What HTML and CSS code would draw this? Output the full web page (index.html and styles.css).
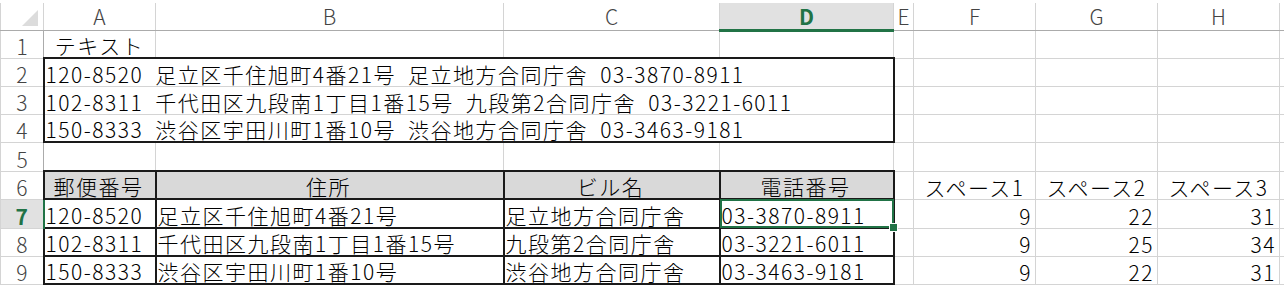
FILE: index.html
```html
<!DOCTYPE html>
<html lang="ja">
<head>
  <meta charset="UTF-8">
  <title>Sheet1</title>
  <link rel="stylesheet" href="styles.css">
</head>
<body>
  <table class="sheet">
    <colgroup>
      <col class="w-rh"><col class="w-a"><col class="w-b"><col class="w-c"><col class="w-d">
      <col class="w-e"><col class="w-f"><col class="w-g"><col class="w-h"><col class="w-i">
    </colgroup>
    <tr class="head">
      <th class="corner"><span class="tri"></span></th>
      <th>A</th><th>B</th><th>C</th><th class="cur-col">D</th><th>E</th><th>F</th><th>G</th><th>H</th><th></th>
    </tr>
    <tr class="h28">
      <th class="rn">1</th>
      <td class="center">テキスト</td><td></td><td></td><td></td><td></td><td></td><td></td><td></td><td></td>
    </tr>
    <tr class="h28">
      <th class="rn">2</th>
      <td colspan="4" class="box box-top">120-8520 足立区千住旭町4番21号 足立地方合同庁舎 03-3870-8911</td>
      <td></td><td></td><td></td><td></td><td></td>
    </tr>
    <tr class="h28">
      <th class="rn">3</th>
      <td colspan="4" class="box">102-8311 千代田区九段南1丁目1番15号 九段第2合同庁舎 03-3221-6011</td>
      <td></td><td></td><td></td><td></td><td></td>
    </tr>
    <tr class="h28">
      <th class="rn">4</th>
      <td colspan="4" class="box box-bot">150-8333 渋谷区宇田川町1番10号 渋谷地方合同庁舎 03-3463-9181</td>
      <td></td><td></td><td></td><td></td><td></td>
    </tr>
    <tr class="h29">
      <th class="rn">5</th>
      <td></td><td></td><td></td><td></td><td></td><td></td><td></td><td></td><td></td>
    </tr>
    <tr class="h28">
      <th class="rn">6</th>
      <td class="grid hd">郵便番号</td><td class="grid hd">住所</td><td class="grid hd">ビル名</td><td class="grid hd">電話番号</td>
      <td></td><td class="center">スペース1</td><td class="center">スペース2</td><td class="center">スペース3</td><td></td>
    </tr>
    <tr class="h29">
      <th class="rn cur-row">7</th>
      <td class="grid">120-8520</td><td class="grid">足立区千住旭町4番21号</td><td class="grid">足立地方合同庁舎</td>
      <td class="grid active">03-3870-8911<span class="sel"><span class="handle"></span></span></td>
      <td></td><td class="num">9</td><td class="num">22</td><td class="num">31</td><td></td>
    </tr>
    <tr class="h28">
      <th class="rn">8</th>
      <td class="grid">102-8311</td><td class="grid">千代田区九段南1丁目1番15号</td><td class="grid">九段第2合同庁舎</td><td class="grid">03-3221-6011</td>
      <td></td><td class="num">9</td><td class="num">25</td><td class="num">34</td><td></td>
    </tr>
    <tr class="h28">
      <th class="rn">9</th>
      <td class="grid">150-8333</td><td class="grid">渋谷区宇田川町1番10号</td><td class="grid">渋谷地方合同庁舎</td><td class="grid">03-3463-9181</td>
      <td></td><td class="num">9</td><td class="num">22</td><td class="num">31</td><td></td>
    </tr>
  </table>
</body>
</html>
```

FILE: styles.css
```css
body {
  margin: 0;
  padding-top: 3px;
  background: #fff;
  font-family: "Noto Sans CJK JP", sans-serif;
  overflow: hidden;
}
.sheet {
  border-collapse: collapse;
  table-layout: fixed;
  width: 1284px;
}
.w-rh { width: 43px; }
.w-a { width: 112px; }
.w-b { width: 348px; }
.w-c { width: 216px; }
.w-d { width: 174px; }
.w-e { width: 20px; }
.w-f { width: 122px; }
.w-g { width: 122px; }
.w-h { width: 122px; }
.w-i { width: 5px; }

th, td {
  padding: 0 3px;
  border: 1px solid #d4d4d4;
  white-space: nowrap;
  font-size: 21px;
  font-weight: 300;
  letter-spacing: 1.5px;
  word-spacing: 6px;
  line-height: 24px;
  vertical-align: bottom;
  color: #000;
}
.head { height: 27px; }
.h28 { height: 28px; }
.h29 { height: 29px; }

/* headers */
.head th {
  color: #444;
  font-size: 21px;
  letter-spacing: 0;
  text-align: center;
  vertical-align: middle;
  border-top: none;
  border-bottom: 1px solid #ababab;
}
.rn {
  color: #444;
  letter-spacing: 0;
  text-align: center;
  padding: 0;
  border-right: 1px solid #ababab;
}
.corner { position: relative; padding: 0; }
.tri {
  position: absolute;
  right: 5px;
  bottom: 4px;
  width: 0;
  height: 0;
  border-left: 16px solid transparent;
  border-bottom: 16px solid #dcdcdc;
}
.head th.cur-col {
  background: #e1e1e1;
  color: #217346;
  font-weight: bold;
  border-bottom: 3px solid #217346;
}
.rn.cur-row {
  background: #e1e1e1;
  color: #217346;
  font-weight: bold;
  border-right: 2px solid #217346;
}

/* cells */
.center { text-align: center; }
.num { text-align: right; }
.box {
  border-left: 2px solid #1a1a1a;
  border-right: 2px solid #1a1a1a;
  padding-left: 1px;
}
.box-top { border-top: 2px solid #1a1a1a; }
.box-bot { border-bottom: 2px solid #1a1a1a; }
.grid {
  border: 2px solid #1a1a1a;
  padding-left: 1px;
}
.hd {
  background: #d9d9d9;
  text-align: center;
}
.active {
  position: relative;
}
.sel {
  position: absolute;
  top: -1px;
  left: -1px;
  right: -1px;
  bottom: -1px;
  border: 2px solid #217346;
}
.handle {
  position: absolute;
  right: -6px;
  bottom: -6px;
  width: 7px;
  height: 7px;
  background: #217346;
  border: 1px solid #fff;
}
```
